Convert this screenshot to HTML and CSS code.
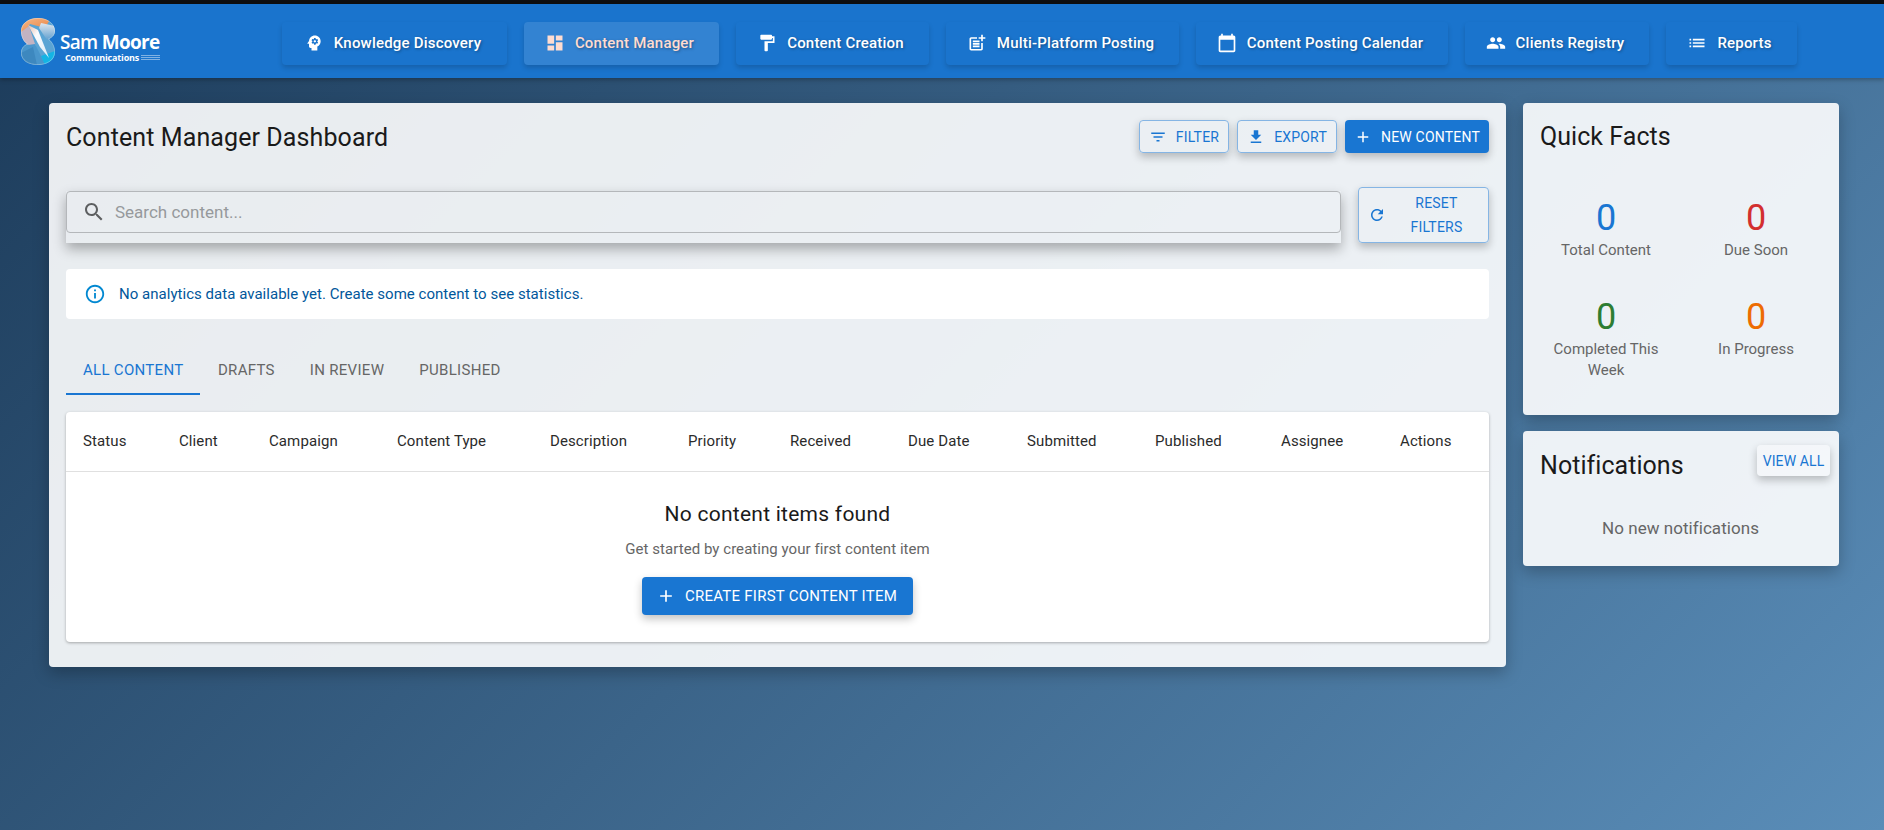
FILE: index.html
```html
<!DOCTYPE html>
<html lang="en">
<head>
  <meta charset="UTF-8">
  <title>Content Manager Dashboard</title>
  <link rel="stylesheet" href="styles.css">
</head>
<body>
  <div class="top-strip"></div>

  <!-- Header -->
  <header class="app-bar">
    <div class="logo">
      <svg class="logo-mark" viewBox="0 0 34 47">
        <defs>
          <clipPath id="logoS">
            <path d="M17 0C27 0 34 6 34 13C34 16 32 19 28 21C32 25 34 29 34 34C34 42 26 47 17 47C7 47 0 42 0 35C0 31 2 28 6 26C2 23 0 18 0 13C0 6 7 0 17 0Z"/>
          </clipPath>
          <linearGradient id="logoTop" x1="0" y1="0" x2="1" y2="1">
            <stop offset="0" stop-color="#f5b98a"/>
            <stop offset="1" stop-color="#e9803f"/>
          </linearGradient>
          <linearGradient id="logoRight" x1="0" y1="0" x2="0" y2="1">
            <stop offset="0" stop-color="#dfe6ee"/>
            <stop offset="1" stop-color="#5f9fd0"/>
          </linearGradient>
          <linearGradient id="logoStreak" x1="0" y1="0" x2="1" y2="1">
            <stop offset="0" stop-color="#e9b9a6"/>
            <stop offset=".35" stop-color="#fbfbfd"/>
            <stop offset="1" stop-color="#dcecf7"/>
          </linearGradient>
        </defs>
        <g clip-path="url(#logoS)">
          <rect width="34" height="47" fill="#5aa4d4"/>
          <path d="M0 0H30L24 10L9 6L4 14H0Z" fill="url(#logoTop)"/>
          <path d="M20 5L34 8V21L26 22L18 10Z" fill="url(#logoRight)"/>
          <path d="M0 14L8 8L15 29L8 27L0 24Z" fill="#c3b3c2"/>
          <path d="M0 28L14 26L24 46L17 47H0Z" fill="#4a96cc"/>
          <path d="M0 35L12 29L16 47L3 45Z" fill="#3d88bf"/>
          <path d="M20 38L34 33V44L24 47Z" fill="#14b4e4"/>
          <path d="M7 7L17 12L28 40L19 29Z" fill="url(#logoStreak)"/>
        </g>
        <path d="M17 .4C27 .4 33.6 6 33.6 13C33.6 16 32 19 27.4 21C32 25 33.6 29 33.6 34C33.6 42 26 46.6 17 46.6C7 46.6 .4 42 .4 35C.4 31 2 28 6.6 26C2 23 .4 18 .4 13C.4 6 7 .4 17 .4Z" fill="none" stroke="#fff" stroke-opacity=".35" stroke-width=".8"/>
      </svg>
      <div class="logo-text">
        <div class="logo-name">Sam <b>Moore</b></div>
        <div class="logo-sub">Communications<span class="logo-lines"><i></i><i></i><i></i></span></div>
      </div>
    </div>
    <nav class="nav">
      <a class="nav-btn" style="width: 225px"><svg viewBox="0 0 24 24"><path d="M13 8.57c-.79 0-1.43.64-1.43 1.43s.64 1.43 1.43 1.43 1.43-.64 1.43-1.43-.64-1.43-1.43-1.43z"/><path d="M13 3C9.25 3 6.2 5.94 6.02 9.64L4.1 12.2c-.25.33-.01.8.4.8H6v3c0 1.1.9 2 2 2h1v3h7v-4.68c2.36-1.12 4-3.53 4-6.32 0-3.87-3.13-7-7-7zm3 7c0 .13-.01.26-.02.39l.83.66c.08.06.1.16.05.25l-.8 1.39c-.05.09-.16.12-.24.09l-.99-.4c-.21.16-.43.29-.67.39L14 13.83c-.01.1-.1.17-.2.17h-1.6c-.1 0-.18-.07-.2-.17l-.15-1.06c-.25-.1-.47-.23-.68-.39l-.99.4c-.09.03-.2 0-.25-.09l-.8-1.39c-.05-.08-.03-.19.05-.25l.84-.66c-.01-.13-.02-.26-.02-.39s.02-.27.04-.39l-.85-.66c-.08-.06-.1-.16-.05-.26l.8-1.38c.05-.09.15-.12.24-.09l1 .4c.2-.15.43-.29.67-.39L12 6.17c.02-.1.1-.17.2-.17h1.6c.1 0 .18.07.2.17l.15 1.06c.24.1.46.23.67.39l1-.4c.09-.03.2 0 .24.09l.8 1.38c.05.09.03.2-.05.26l-.85.66c.03.12.04.25.04.39z"/></svg>Knowledge Discovery</a>
      <a class="nav-btn active" style="width: 195px"><svg viewBox="0 0 24 24"><path d="M3 13h8V3H3v10zm0 8h8v-6H3v6zm10 0h8V11h-8v10zm0-18v6h8V3h-8z"/></svg>Content Manager</a>
      <a class="nav-btn" style="width: 193px"><svg viewBox="0 0 24 24"><path d="M18 4V3c0-.55-.45-1-1-1H5c-.55 0-1 .45-1 1v4c0 .55.45 1 1 1h12c.55 0 1-.45 1-1V6h1v4H9v11c0 .55.45 1 1 1h2c.55 0 1-.45 1-1v-9h8V4h-3z"/></svg>Content Creation</a>
      <a class="nav-btn" style="width: 233px"><svg viewBox="0 0 24 24"><path d="M17 19.22H5V7h7V5H5c-1.1 0-2 .9-2 2v12c0 1.1.9 2 2 2h12c1.1 0 2-.9 2-2v-7h-2v7.22z"/><path d="M19 2h-2v3h-3c.01.01 0 2 0 2h3v2.99c.01.01 2 0 2 0V7h3V5h-3V2z"/><path d="M7 9h8v2H7zM7 12v2h8v-2h-3zM7 15h8v2H7z"/></svg>Multi-Platform Posting</a>
      <a class="nav-btn" style="width: 252px"><svg viewBox="0 0 24 24"><path d="M20 3h-1V1h-2v2H7V1H5v2H4c-1.1 0-2 .9-2 2v16c0 1.1.9 2 2 2h16c1.1 0 2-.9 2-2V5c0-1.1-.9-2-2-2zm0 18H4V8h16v13z"/></svg>Content Posting Calendar</a>
      <a class="nav-btn" style="width: 184px"><svg viewBox="0 0 24 24"><path d="M16 11c1.66 0 2.99-1.34 2.99-3S17.66 5 16 5c-1.66 0-3 1.34-3 3s1.34 3 3 3zm-8 0c1.66 0 2.99-1.34 2.99-3S9.66 5 8 5C6.34 5 5 6.34 5 8s1.34 3 3 3zm0 2c-2.33 0-7 1.17-7 3.5V19h14v-2.5c0-2.33-4.67-3.5-7-3.5zm8 0c-.29 0-.62.02-.97.05 1.16.84 1.97 1.97 1.97 3.45V19h6v-2.5c0-2.33-4.67-3.5-7-3.5z"/></svg>Clients Registry</a>
      <a class="nav-btn" style="width: 131px"><svg viewBox="0 0 24 24"><path d="M3 13h2v-2H3v2zm0 4h2v-2H3v2zm0-8h2V7H3v2zm4 4h14v-2H7v2zm0 4h14v-2H7v2zM7 7v2h14V7H7z"/></svg>Reports</a>
    </nav>
  </header>

  <div class="page">
    <!-- Main -->
    <main class="card main-card">
      <div class="title-row">
        <h1>Content Manager Dashboard</h1>
        <div class="actions">
          <button class="btn outlined"><svg viewBox="0 0 24 24"><path d="M10 18h4v-2h-4v2zM3 6v2h18V6H3zm3 7h12v-2H6v2z"/></svg>Filter</button>
          <button class="btn outlined"><svg viewBox="0 0 24 24"><path d="M19 9h-4V3H9v6H5l7 7 7-7zM5 18v2h14v-2H5z"/></svg>Export</button>
          <button class="btn primary"><svg viewBox="0 0 24 24"><path d="M19 13h-6v6h-2v-6H5v-2h6V5h2v6h6v2z"/></svg>New Content</button>
        </div>
      </div>

      <div class="search-row">
        <div class="search-paper">
          <div class="search-field">
            <svg viewBox="0 0 24 24"><path d="M15.5 14h-.79l-.28-.27C15.41 12.59 16 11.11 16 9.5 16 5.91 13.09 3 9.5 3S3 5.91 3 9.5 5.91 16 9.5 16c1.61 0 3.09-.59 4.23-1.57l.27.28v.79l5 4.99L20.49 19l-4.99-5zm-6 0C7.01 14 5 11.99 5 9.5S7.01 5 9.5 5 14 7.01 14 9.5 11.99 14 9.5 14z"/></svg>
            <input type="text" placeholder="Search content...">
          </div>
        </div>
        <button class="btn outlined reset"><svg viewBox="0 0 24 24"><path d="M17.65 6.35C16.2 4.9 14.21 4 12 4c-4.42 0-7.99 3.58-7.99 8s3.57 8 7.99 8c3.73 0 6.84-2.55 7.73-6h-2.08c-.82 2.33-3.04 4-5.65 4-3.31 0-6-2.69-6-6s2.69-6 6-6c1.66 0 3.14.69 4.22 1.78L13 11h7V4l-2.35 2.35z"/></svg><span>Reset Filters</span></button>
      </div>

      <div class="alert">
        <svg viewBox="0 0 24 24"><path d="M11 7h2v2h-2zm0 4h2v6h-2zm1-9C6.48 2 2 6.48 2 12s4.48 10 10 10 10-4.48 10-10S17.52 2 12 2zm0 18c-4.41 0-8-3.59-8-8s3.59-8 8-8 8 3.59 8 8-3.59 8-8 8z"/></svg>
        No analytics data available yet. Create some content to see statistics.
      </div>

      <div class="tabs">
        <a class="tab selected">All Content</a>
        <a class="tab">Drafts</a>
        <a class="tab">In Review</a>
        <a class="tab">Published</a>
      </div>

      <div class="table-card">
        <table>
          <colgroup>
            <col style="width: 96px"><col style="width: 90px"><col style="width: 128px"><col style="width: 153px">
            <col style="width: 138px"><col style="width: 102px"><col style="width: 118px"><col style="width: 119px">
            <col style="width: 128px"><col style="width: 126px"><col style="width: 119px"><col style="width: 106px">
          </colgroup>
          <thead>
            <tr>
              <th>Status</th><th>Client</th><th>Campaign</th><th>Content Type</th>
              <th>Description</th><th>Priority</th><th>Received</th><th>Due Date</th>
              <th>Submitted</th><th>Published</th><th>Assignee</th><th>Actions</th>
            </tr>
          </thead>
        </table>
        <div class="empty">
          <h2>No content items found</h2>
          <p>Get started by creating your first content item</p>
          <button class="btn primary big"><svg viewBox="0 0 24 24"><path d="M19 13h-6v6h-2v-6H5v-2h6V5h2v6h6v2z"/></svg>Create First Content Item</button>
        </div>
      </div>
    </main>

    <!-- Sidebar -->
    <aside class="side">
      <section class="card facts">
        <h3>Quick Facts</h3>
        <div class="facts-grid">
          <div class="fact"><div class="num blue">0</div><div class="lbl">Total Content</div></div>
          <div class="fact"><div class="num red">0</div><div class="lbl">Due Soon</div></div>
          <div class="fact"><div class="num green">0</div><div class="lbl">Completed This Week</div></div>
          <div class="fact"><div class="num orange">0</div><div class="lbl">In Progress</div></div>
        </div>
      </section>
      <section class="card notes">
        <div class="notes-head">
          <h3>Notifications</h3>
          <button class="view-all">View All</button>
        </div>
        <p class="no-notes">No new notifications</p>
      </section>
    </aside>
  </div>
</body>
</html>
```

FILE: styles.css
```css
* {
  box-sizing: border-box;
}
html, body {
  height: 100%;
}
body {
  margin: 0;
  font-family: Roboto, "Liberation Sans", sans-serif;
  color: #1a1a1a;
  background: linear-gradient(135deg, #1c3b5a 0%, #5a8db8 100%);
  overflow: hidden;
}
h1, h2, h3, p {
  margin: 0;
  font-weight: 400;
}
svg {
  fill: currentColor;
  flex: none;
}

.top-strip {
  height: 4px;
  background: #0e0f11;
}

/* HEADER */
.app-bar {
  height: 74px;
  background: #1a74cd;
  display: flex;
  align-items: center;
  box-shadow: 0 2px 4px rgba(0, 0, 0, 0.25);
}
.logo {
  width: 282px;
  padding-left: 21px;
  display: flex;
  align-items: flex-end;
  color: #fff;
}
.logo-mark {
  width: 34px;
  height: 47px;
}
.logo-text {
  margin-left: 5px;
  margin-bottom: 2px;
}
.logo-name {
  font-family: "Open Sans", sans-serif;
  font-size: 19px;
  font-weight: 600;
  line-height: 20px;
  letter-spacing: -0.7px;
}
.logo-name b {
  font-weight: 700;
}
.logo-sub {
  font-family: "Open Sans", sans-serif;
  font-size: 9px;
  font-weight: 700;
  line-height: 11px;
  margin-left: 5px;
  letter-spacing: -0.15px;
  display: flex;
  align-items: center;
}
.logo-lines {
  margin-left: 2px;
  display: block;
}
.logo-lines i {
  display: block;
  height: 1px;
  width: 19px;
  margin: 1px 0;
  background: rgba(255, 255, 255, 0.45);
}
.nav {
  display: flex;
  gap: 17px;
  margin-top: 4px;
}
.nav-btn {
  height: 43px;
  padding-right: 4px;
  display: flex;
  align-items: center;
  justify-content: center;
  gap: 10px;
  border-radius: 4px;
  color: #fff;
  font-size: 15px;
  font-weight: 500;
  letter-spacing: 0.2px;
  text-shadow: 1px 1px 3px rgba(0, 0, 0, 0.35);
  box-shadow: 0 3px 5px rgba(0, 0, 0, 0.16);
}
.nav-btn svg {
  width: 20px;
  height: 20px;
}
.nav-btn.active {
  background: rgba(255, 255, 255, 0.11);
  color: #ffdcd0;
}

/* CARDS */
.page {
  display: grid;
  grid-template-columns: 1457px 316px;
  gap: 17px;
  align-items: start;
  padding: 25px 0 0 49px;
}
.card {
  background: rgba(255, 255, 255, 0.9);
  border-radius: 4px;
  box-shadow: 0 6px 16px rgba(0, 0, 0, 0.25);
}
.main-card {
  padding: 17px 17px 25px;
}
.title-row {
  display: flex;
  justify-content: space-between;
  align-items: center;
  height: 33px;
  margin-bottom: 34px;
}
.title-row h1 {
  font-size: 25px;
  letter-spacing: 0.1px;
  padding-top: 1px;
}
.actions {
  display: flex;
  gap: 8px;
}

/* BUTTONS */
.btn {
  font-family: inherit;
  font-size: 14px;
  font-weight: 400;
  letter-spacing: 0.2px;
  text-transform: uppercase;
  height: 33px;
  padding: 0 9px;
  display: flex;
  align-items: center;
  gap: 9px;
  border-radius: 4px;
  cursor: pointer;
  box-shadow: 0 4px 8px rgba(0, 0, 0, 0.24);
}
.btn svg {
  width: 18px;
  height: 18px;
}
.outlined {
  background: transparent;
  color: #1976d2;
  border: 1px solid #85b5e4;
}
.primary {
  background: #1976d2;
  color: #fff;
  border: none;
}
.big {
  height: 38px;
  padding: 0 16px 0 14px;
  margin: 0 auto;
  gap: 9px;
  font-size: 15px;
  letter-spacing: 0.25px;
}
.big svg {
  width: 20px;
  height: 20px;
}

/* SEARCH */
.search-row {
  display: flex;
  gap: 17px;
  height: 56px;
}
.search-paper {
  width: 1275px;
  height: 52px;
  margin-top: 4px;
  box-shadow: 0 6px 12px rgba(0, 0, 0, 0.3);
}
.search-field {
  height: 42px;
  display: flex;
  align-items: center;
  gap: 7px;
  padding: 0 15px;
  border: 1px solid #b4b7ba;
  border-radius: 4px;
  color: #5d5f61;
}
.search-field svg {
  width: 24px;
  height: 24px;
}
.search-field input {
  flex: 1;
  border: none;
  outline: none;
  background: none;
  font-family: inherit;
  font-size: 17px;
}
.search-field input::placeholder {
  color: #96999c;
  opacity: 1;
}
.reset {
  width: 131px;
  height: 56px;
  padding: 0 9px;
  gap: 0;
  line-height: 24px;
}
.reset svg {
  width: 18px;
  height: 18px;
}
.reset span {
  flex: 1;
  text-align: center;
  padding: 0 0 0 8px;
}

/* ALERT */
.alert {
  margin-top: 26px;
  height: 50px;
  padding: 0 18px;
  display: flex;
  align-items: center;
  gap: 13px;
  background: #fff;
  border-radius: 4px;
  font-size: 15px;
  letter-spacing: 0.03px;
  color: #01579b;
}
.alert svg {
  width: 22px;
  height: 22px;
  color: #0288d1;
}

/* TABS */
.tabs {
  margin-top: 28px;
  display: flex;
  height: 48px;
}
.tab {
  padding: 0 17.5px;
  display: flex;
  align-items: center;
  font-size: 15px;
  letter-spacing: 0.3px;
  text-transform: uppercase;
  color: #666;
  border-bottom: 2px solid transparent;
}
.tab.selected {
  padding: 0 17px;
  color: #1976d2;
  border-bottom-color: #1976d2;
}

/* TABLE */
.table-card {
  margin-top: 17px;
  height: 230px;
  background: #fff;
  border-radius: 4px;
  box-shadow: 0 1px 3px rgba(0, 0, 0, 0.3);
}
table {
  width: 100%;
  table-layout: fixed;
  border-collapse: collapse;
}
th {
  height: 59px;
  padding: 0 17px;
  text-align: left;
  font-size: 15px;
  font-weight: 400;
  letter-spacing: 0.1px;
  color: #2b2b2b;
  white-space: nowrap;
  border-bottom: 1px solid #e0e0e0;
}
.empty {
  padding-top: 30px;
  text-align: center;
}
.empty h2 {
  font-size: 21px;
  letter-spacing: 0.25px;
  line-height: 24px;
}
.empty p {
  margin-top: 13px;
  margin-bottom: 17px;
  font-size: 15px;
  letter-spacing: 0.05px;
  line-height: 21px;
  color: #666;
}

/* SIDE */
.side {
  display: flex;
  flex-direction: column;
  gap: 16px;
}
.side h3 {
  font-size: 25px;
  letter-spacing: 0.05px;
  line-height: 32px;
}
.facts {
  height: 312px;
  padding: 18px 17px;
}
.facts-grid {
  margin: 44px -9px 0;
  display: grid;
  grid-template-columns: 1fr 1fr;
  text-align: center;
}
.fact {
  height: 99px;
  padding: 0 6px;
}
.num {
  font-size: 36px;
  line-height: 43px;
}
.lbl {
  font-size: 15px;
  line-height: 21px;
  color: #666;
}
.blue { color: #1976d2; }
.red { color: #d32f2f; }
.green { color: #2e7d32; }
.orange { color: #ed6c02; }
.notes {
  height: 135px;
  padding: 14px 9px 0 17px;
}
.notes-head {
  display: flex;
  justify-content: space-between;
  align-items: flex-start;
}
.notes-head h3 {
  margin-top: 5px;
}
.view-all {
  width: 73px;
  height: 31px;
  border: none;
  border-radius: 4px;
  background: rgba(255, 255, 255, 0.35);
  color: #1976d2;
  font-family: inherit;
  font-size: 14px;
  letter-spacing: 0.1px;
  text-transform: uppercase;
  padding: 0;
  box-shadow: 0 4px 8px rgba(0, 0, 0, 0.24);
}
.no-notes {
  margin-top: 36px;
  text-align: center;
  font-size: 17px;
  letter-spacing: 0.05px;
  color: #666;
  padding-right: 9px;
}
```
